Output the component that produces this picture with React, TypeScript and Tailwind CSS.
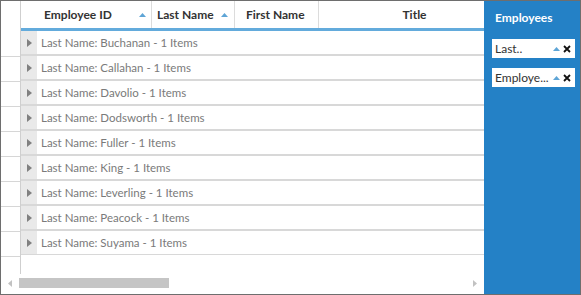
const rows = [
  "Buchanan",
  "Callahan",
  "Davolio",
  "Dodsworth",
  "Fuller",
  "King",
  "Leverling",
  "Peacock",
  "Suyama",
];

const SortUp = () => (
  <svg width="7" height="4" viewBox="0 0 7 4" className="shrink-0">
    <path d="M0 4 L3.5 0 L7 4 Z" fill="#5ea5d6" />
  </svg>
);

const Expander = () => (
  <svg width="5" height="8" viewBox="0 0 5 8">
    <path d="M0 0 L5 4 L0 8 Z" fill="#808080" />
  </svg>
);

const Chip = ({ label }: { label: string }) => (
  <div className="h-[19px] bg-white flex items-center pl-[3px] pr-[4px] text-[12px] text-[#333] min-w-0">
    <span className="flex-1 min-w-0 whitespace-nowrap overflow-hidden">{label}</span>
    <span className="mx-[3px]">
      <SortUp />
    </span>
    <svg width="8" height="8" viewBox="0 0 8 8" className="shrink-0">
      <path d="M1 1 L7 7 M7 1 L1 7" stroke="#111" strokeWidth="1.8" />
    </svg>
  </div>
);

export default function App() {
  return (
    <div
      className="w-[581px] h-[295px] flex border border-[#6e6e6e] bg-white text-[12px]"
      style={{ fontFamily: "Lato, 'Open Sans', sans-serif" }}
    >
      {/* grid area */}
      <div className="w-[483px] shrink-0 flex flex-col">
        <div className="flex flex-1 min-h-0">
          {/* row header column */}
          <div className="w-[20px] border-r border-[#cfcfcf] flex flex-col">
            <div className="h-[31px] shrink-0" />
            {rows.map((r) => (
              <div key={r} className="h-[25px] shrink-0 border-b border-[#d6d6d6]" />
            ))}
          </div>

          {/* data */}
          <div className="flex-1 flex flex-col">
            <div className="h-[27px] flex font-bold text-[#333]">
              <div className="w-[131px] flex items-center pl-[23px] pr-[5px] border-r border-[#dcdcdc]">
                <span className="flex-1">Employee ID</span>
                <SortUp />
              </div>
              <div className="w-[83px] flex items-center pl-[5px] pr-[6px] border-r border-[#dcdcdc]">
                <span className="flex-1">Last Name</span>
                <SortUp />
              </div>
              <div className="w-[84px] flex items-center pl-[11px] border-r border-[#dcdcdc]">
                First Name
              </div>
              <div className="flex-1 flex items-center justify-center pl-[26px]">Title</div>
            </div>
            <div className="h-[3px] bg-[#63abdc]" />
            {rows.map((r, i) => (
              <div
                key={r}
                className={`flex ${i === 0 ? "h-[24px]" : "h-[25px] border-t border-[#d8d8d8]"} border-b border-b-[#d8d8d8]`}
              >
                <div className="w-[16px] bg-[#e9e9e9] flex items-center justify-center">
                  <Expander />
                </div>
                <div className="flex-1 flex items-center pl-[4px] text-[11.5px] text-[#7a7a7a]">
                  Last Name: {r} - 1 Items
                </div>
              </div>
            ))}
          </div>
        </div>

        {/* horizontal scrollbar */}
        <div className="h-[20px] shrink-0 flex items-center px-[7px] pb-[2px]">
          <svg width="4" height="7" viewBox="0 0 4 7">
            <path d="M4 0 L0 3.5 L4 7 Z" fill="#c2c2c2" />
          </svg>
          <div className="ml-[7px] w-[150px] h-[10px] bg-[#c5c5c5]" />
          <div className="flex-1" />
          <svg width="4" height="7" viewBox="0 0 4 7">
            <path d="M0 0 L4 3.5 L0 7 Z" fill="#c2c2c2" />
          </svg>
        </div>
      </div>

      {/* grouping panel */}
      <div className="flex-1 min-w-0 bg-[#2481c6] pl-[8px] pr-[5px] pt-[8px] flex flex-col">
        <div className="text-white font-bold text-[12px] pl-[3px]">Employees</div>
        <div className="mt-[12px] flex flex-col gap-[10px]">
          <Chip label="Last.." />
          <Chip label="Employe..." />
        </div>
      </div>
    </div>
  );
}
